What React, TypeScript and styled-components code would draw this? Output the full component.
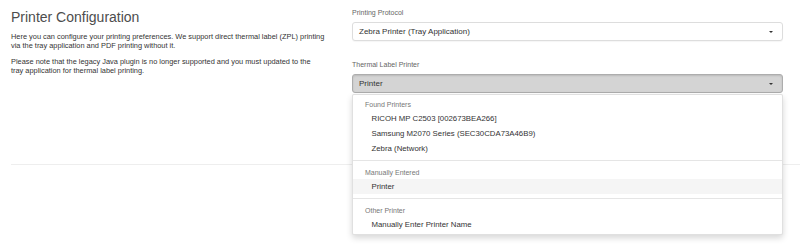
import React, { useState } from 'react';
import styled, { createGlobalStyle } from 'styled-components';

const GlobalStyle = createGlobalStyle`
    html, body {
        margin: 0;
        padding: 0;
        background: #fff;
    }
    body {
        font-family: "Liberation Sans", Arial, Helvetica, sans-serif;
        color: #333;
        -webkit-font-smoothing: antialiased;
    }
`;

interface PrinterGroup {
    header: string;
    printers: string[];
}

const groups: PrinterGroup[] = [
    {
        header: 'Found Printers',
        printers: [
            'RICOH MP C2503 [002673BEA266]',
            'Samsung M2070 Series (SEC30CDA73A46B9)',
            'Zebra (Network)',
        ],
    },
    { header: 'Manually Entered', printers: ['Printer'] },
    { header: 'Other Printer', printers: ['Manually Enter Printer Name'] },
];

export default function App() {
    const [printer, setPrinter] = useState('Printer');
    const [open, setOpen] = useState(true);

    return (
        <>
            <GlobalStyle />
            <Page>
                <Row>
                    <Intro>
                        <Title>Printer Configuration</Title>
                        <Paragraph>
                            Here you can configure your printing preferences. We support direct thermal label (ZPL) printing
                            <br />
                            via the tray application and PDF printing without it.
                        </Paragraph>
                        <Paragraph>
                            Please note that the legacy Java plugin is no longer supported and you must updated to the
                            <br />
                            tray application for thermal label printing.
                        </Paragraph>
                    </Intro>
                    <Settings>
                        <FormGroup>
                            <Label>Printing Protocol</Label>
                            <Select>
                                <span>Zebra Printer (Tray Application)</span>
                                <Caret />
                            </Select>
                        </FormGroup>
                        <FormGroup>
                            <Label>Thermal Label Printer</Label>
                            <SelectWrap>
                                <Select $active={open} onClick={() => setOpen(!open)}>
                                    <span>{printer}</span>
                                    <Caret />
                                </Select>
                                {open && (
                                    <Menu>
                                        {groups.map((group, index) => (
                                            <React.Fragment key={group.header}>
                                                {index > 0 && <Divider />}
                                                <MenuHeader>{group.header}</MenuHeader>
                                                {group.printers.map((name) => (
                                                    <MenuItem
                                                        key={name}
                                                        $selected={name === printer}
                                                        onClick={() => setPrinter(name)}
                                                    >
                                                        {name}
                                                    </MenuItem>
                                                ))}
                                            </React.Fragment>
                                        ))}
                                    </Menu>
                                )}
                            </SelectWrap>
                        </FormGroup>
                        <HiddenControl />
                    </Settings>
                </Row>
                <Rule />
            </Page>
        </>
    );
}

// Styled Components
const Page = styled.div`
    min-height: 246px;
    padding: 0 0 0 11px;
`;

const Row = styled.div`
    display: grid;
    grid-template-columns: 1fr 431px;
    column-gap: 11px;
    padding-right: 17px;
`;

const Intro = styled.div`
    padding-top: 10px;
`;

const Title = styled.h3`
    margin: 0 0 9px;
    font-size: 14px;
    line-height: 14px;
    font-weight: 400;
    color: #4d4d4d;
`;

const Paragraph = styled.p`
    margin: 0 0 8px;
    font-size: 7.4px;
    line-height: 8.5px;
    color: #333;
    white-space: nowrap;
`;

const Settings = styled.div`
    display: flex;
    flex-direction: column;
    padding-top: 9px;
`;

const FormGroup = styled.div`
    display: flex;
    flex-direction: column;
    margin-bottom: 20px;
`;

const Label = styled.label`
    font-size: 7px;
    line-height: 8px;
    color: #666;
    margin-bottom: 5px;
`;

const SelectWrap = styled.div`
    position: relative;
`;

const Select = styled.div<{ $active?: boolean }>`
    display: flex;
    align-items: center;
    justify-content: space-between;
    box-sizing: border-box;
    height: 19px;
    padding: 0 9px 0 6px;
    font-size: 8px;
    color: #333;
    background: ${(p) => (p.$active ? '#d4d4d4' : '#fff')};
    border: 1px solid ${(p) => (p.$active ? '#adadad' : '#ddd')};
    border-radius: 3px;
    box-shadow: ${(p) =>
        p.$active ? 'inset 0 1px 2px rgba(0, 0, 0, 0.125)' : '0 1px 1px rgba(0, 0, 0, 0.04)'};
    cursor: pointer;
`;

const Caret = styled.span`
    width: 0;
    height: 0;
    border-top: 2.5px solid #333;
    border-left: 2px solid transparent;
    border-right: 2px solid transparent;
`;

const Menu = styled.div`
    position: absolute;
    z-index: 10;
    top: calc(100% + 1px);
    left: 0;
    right: 0;
    box-sizing: border-box;
    padding: 2.5px 0;
    background: #fff;
    border: 1px solid rgba(0, 0, 0, 0.12);
    border-radius: 2px;
    box-shadow: 0 3px 6px rgba(0, 0, 0, 0.16);
`;

const MenuHeader = styled.div`
    padding: 0 12px;
    height: 13px;
    line-height: 13px;
    font-size: 7px;
    color: #777;
`;

const MenuItem = styled.div<{ $selected?: boolean }>`
    padding: 0 18.5px;
    height: 15px;
    line-height: 15px;
    font-size: 7.8px;
    color: #333;
    background: ${(p) => (p.$selected ? '#f5f5f5' : 'transparent')};
    cursor: pointer;
`;

const Divider = styled.div`
    height: 1px;
    margin: 4.5px 0;
    background: #e5e5e5;
`;

const HiddenControl = styled.div`
    margin-top: 9px;
    height: 19px;
    box-sizing: border-box;
    border: 1px solid #ccc;
    border-radius: 3px;
`;

const Rule = styled.hr`
    margin: 23px 0 0;
    border: 0;
    border-top: 1px solid #eee;
`;
